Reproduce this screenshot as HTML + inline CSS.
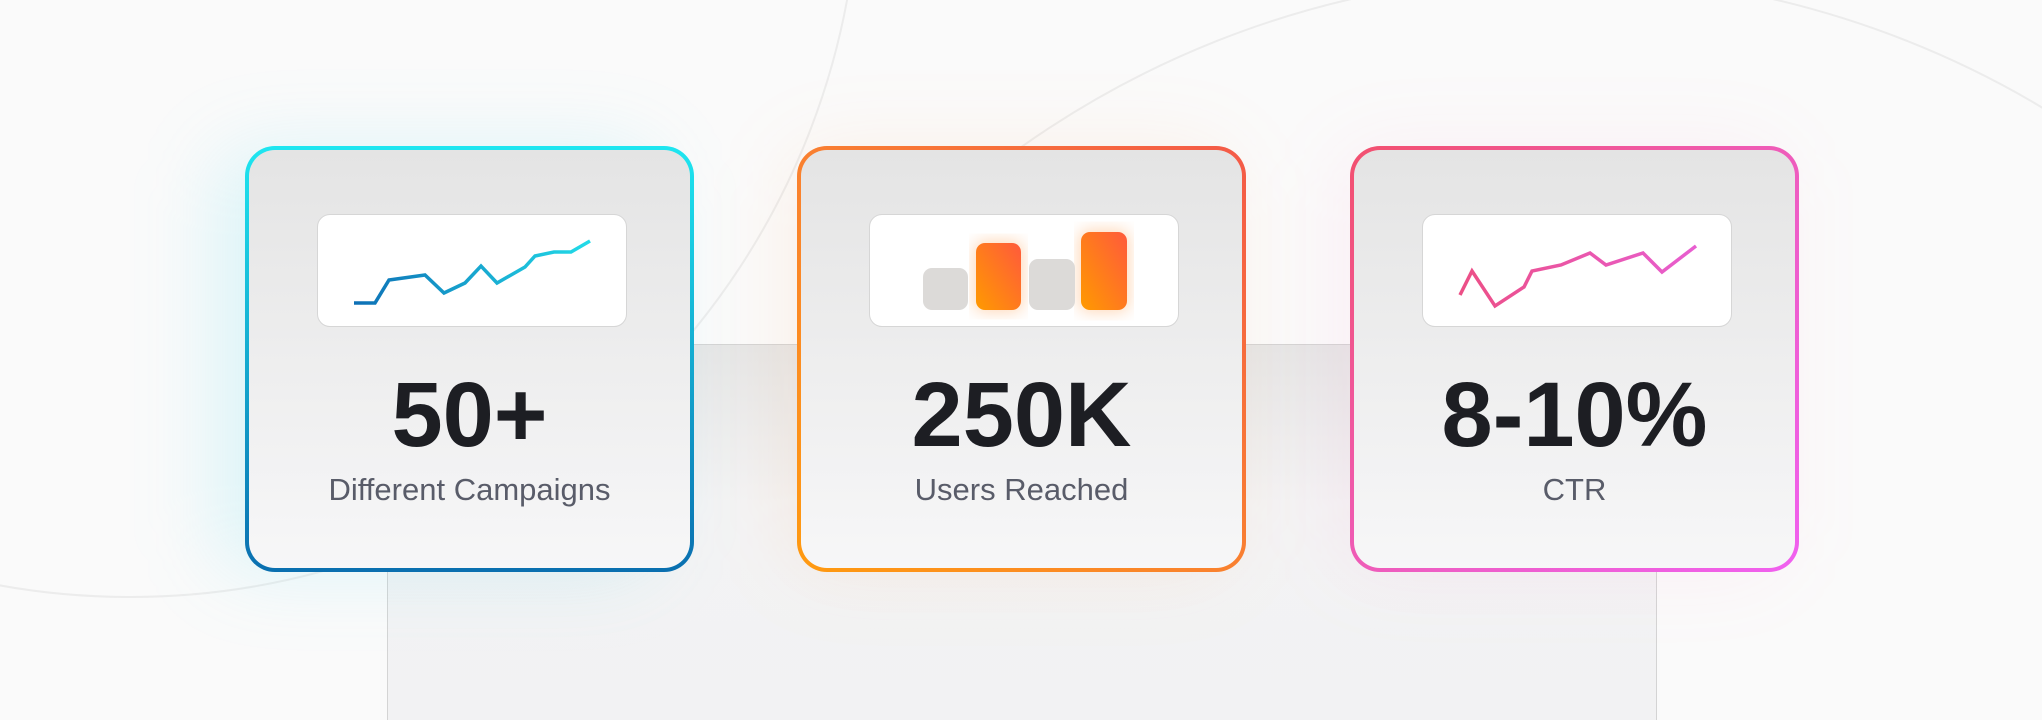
<!DOCTYPE html>
<html><head><meta charset="utf-8"><style>
html,body{margin:0;padding:0;width:2042px;height:720px;overflow:hidden}
body{background:#fafafa;position:relative;font-family:"Liberation Sans",sans-serif}
.circ{position:absolute;border:2px solid #ececec;border-radius:50%;box-sizing:border-box}
.panel{position:absolute;left:387px;top:344px;width:1270px;height:400px;background:linear-gradient(#e6e6e6,#f3f3f4 40%,#f2f2f3);border:1px solid #d4d4d4;box-sizing:border-box}
.glow{position:absolute;width:440px;height:420px;border-radius:40px;filter:blur(40px)}
.card{position:absolute;top:146px;width:449px;height:426px;border:4px solid transparent;border-radius:30px;box-sizing:border-box;
background-origin:border-box;background-clip:padding-box,border-box}
.box{position:absolute;left:68px;top:64px;width:310px;height:113px;background:#fff;border:1px solid #d6d6d6;border-radius:13px;box-sizing:border-box}
.box svg{position:absolute;left:0;top:0}
.num{position:absolute;left:0;right:0;top:213px;text-align:center;font-weight:bold;font-size:92px;color:#1d1e23}
.lab{position:absolute;left:0;right:0;top:322px;text-align:center;font-size:31px;color:#595c69}
</style></head><body>
<div class="circ" style="left:-600px;top:-862px;width:1460px;height:1460px"></div>
<div class="circ" style="left:625px;top:-26px;width:1874px;height:1874px"></div>
<div class="panel"></div>
<div class="glow" style="left:215px;top:150px;background:rgba(60,220,240,.16)"></div>
<div class="glow" style="left:790px;top:150px;background:rgba(255,150,60,.10)"></div>
<div class="glow" style="left:1340px;top:150px;background:rgba(250,100,180,.08)"></div>

<div class="card" style="left:245px;background-image:linear-gradient(#e4e4e4,#f7f7f8),linear-gradient(#1ee6f0,#0a6fb0)">
 <div class="box"><svg width="310" height="113"><defs><linearGradient id="g1" x1="0" x2="1"><stop offset="0" stop-color="#0d6fb5"/><stop offset="1" stop-color="#22dbe8"/></linearGradient></defs>
 <polyline fill="none" stroke="url(#g1)" stroke-width="3.5" points="36,88 57,88 71,65 107,60 126,78 147,68 163,51 179,68 207,52 217,41 236,37 253,37 272,26"/></svg></div>
 <div class="num">50+</div><div class="lab">Different Campaigns</div>
</div>

<div class="card" style="left:797px;background-image:linear-gradient(#e4e4e4,#f7f7f8),linear-gradient(to top right,#ff9a10,#f98030 50%,#f45a48)">
 <div class="box"><svg width="310" height="113"><defs><linearGradient id="g2" x1="0" y1="1" x2="1" y2="0"><stop offset="0" stop-color="#ff9a00"/><stop offset="1" stop-color="#ff5a3c"/></linearGradient><filter id="bl"><feGaussianBlur stdDeviation="8"/></filter></defs>
 <rect x="104" y="26" width="49" height="71" rx="9" fill="#ffb070" opacity=".5" filter="url(#bl)"/>
 <rect x="209" y="15" width="50" height="82" rx="9" fill="#ffb070" opacity=".5" filter="url(#bl)"/>
 <rect x="53" y="53" width="45" height="42" rx="9" fill="#dcdad8"/>
 <rect x="106" y="28" width="45" height="67" rx="9" fill="url(#g2)"/>
 <rect x="159" y="44" width="46" height="51" rx="9" fill="#dcdad8"/>
 <rect x="211" y="17" width="46" height="78" rx="9" fill="url(#g2)"/></svg></div>
 <div class="num">250K</div><div class="lab">Users Reached</div>
</div>

<div class="card" style="left:1350px;background-image:linear-gradient(#e4e4e4,#f7f7f8),linear-gradient(135deg,#f2506e,#ee5ec8 60%,#f060f0)">
 <div class="box"><svg width="310" height="113"><defs><linearGradient id="g3" x1="0" x2="1"><stop offset="0" stop-color="#ec4f86"/><stop offset="1" stop-color="#e85ed0"/></linearGradient></defs>
 <polyline fill="none" stroke="url(#g3)" stroke-width="3.5" points="37,80 49,56 72,91 101,72 109,56 138,50 167,38 183,50 220,38 239,57 273,31"/></svg></div>
 <div class="num">8-10%</div><div class="lab">CTR</div>
</div>
</body></html>
